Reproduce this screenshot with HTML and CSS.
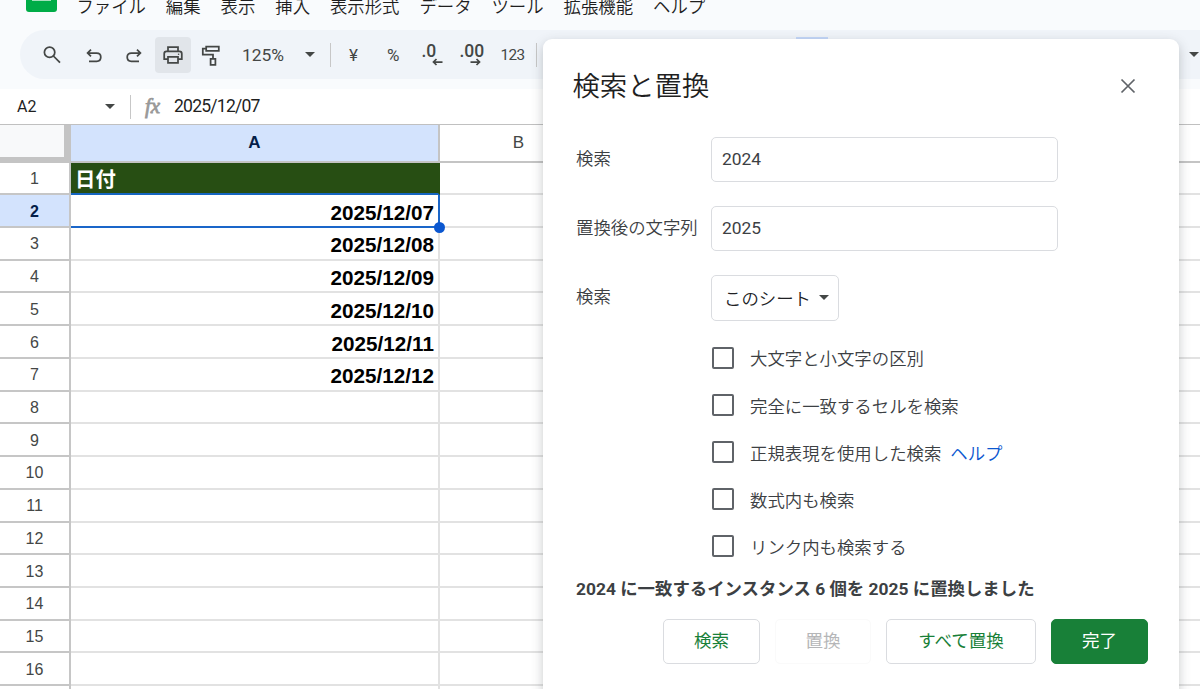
FILE: index.html
```html
<!DOCTYPE html>
<html lang="ja">
<head>
<meta charset="UTF-8" />
<title>スプレッドシート</title>
<link rel="stylesheet" href="styles.css">
</head>
<body>

<div class="menubar">
  <div class="logo"></div>
  <nav class="menus">
    <span>ファイル</span>
    <span>編集</span>
    <span>表示</span>
    <span>挿入</span>
    <span>表示形式</span>
    <span>データ</span>
    <span>ツール</span>
    <span>拡張機能</span>
    <span>ヘルプ</span>
  </nav>
</div>

<div class="toolbar-wrap">
  <div class="toolbar">
    <div class="tool search">
      <svg width="22" height="22" viewBox="0 0 22 22"><circle cx="8.6" cy="8.2" r="5.2"/><path d="M12.4 12l6.6 6.6"/></svg>
    </div>
    <div class="tool undo">
      <svg width="22" height="22" viewBox="0 0 22 22"><path d="M8 5.6L4.6 9 8 12.4M4.8 9h8.8c2.6 0 4.2 1.6 4.2 4s-1.6 4.3-4.2 4.3H6"/></svg>
    </div>
    <div class="tool redo">
      <svg width="22" height="22" viewBox="0 0 22 22"><path d="M15 5.6L18.4 9 15 12.4M18.2 9H9.4c-2.6 0-4.2 1.6-4.2 4s1.6 4.3 4.2 4.3H17"/></svg>
    </div>
    <div class="tool print active">
      <svg width="22" height="22" viewBox="0 0 22 22"><path d="M6 7.4V3.1h10v4.3M5.4 15.2H2.2V9.8c0-1.4.8-2.4 2.2-2.4h13.2c1.4 0 2.2 1 2.2 2.4v5.4h-3.2M6 12.8h10v6H6z"/><circle class="dot" cx="16.6" cy="10.2" r=".8"/></svg>
    </div>
    <div class="tool paint">
      <svg width="22" height="24" viewBox="0 0 22 24"><path d="M6.2 3.5h12.6v4.4H6.2zM6.2 5.6H2.8v6h10.2v4.2M10.6 15.8h4.8v6h-4.8z"/></svg>
    </div>
    <div class="zoom">125%</div>
    <div class="caret"></div>
    <div class="divider"></div>
    <div class="label yen">¥</div>
    <div class="label percent">%</div>
    <div class="decimal less">.0
      <svg width="11" height="8" viewBox="0 0 11 8"><path d="M10.5 4H1.5M4.5 1L1.5 4l3 3"/></svg>
    </div>
    <div class="decimal more">.00
      <svg width="11" height="8" viewBox="0 0 11 8"><path d="M.5 4h9M6.5 1l3 3-3 3"/></svg>
    </div>
    <div class="label number">123</div>
    <div class="divider last"></div>
    <div class="selected-tool"></div>
    <div class="caret end"></div>
  </div>
</div>

<div class="formula-bar">
  <div class="name-box">A2</div>
  <div class="caret"></div>
  <div class="divider"></div>
  <div class="fx">fx</div>
  <div class="formula">2025/12/07</div>
</div>

<div class="sheet">
  <div class="row head">
    <div class="corner"></div>
    <div class="col-a selected">A</div>
    <div class="col-b">B</div>
    <div class="rest"></div>
  </div>
  <div class="row"><div class="num">1</div><div class="col-a title">日付</div><div class="rest"></div></div>
  <div class="row"><div class="num selected">2</div><div class="col-a cursor">2025/12/07<i class="handle"></i></div><div class="rest"></div></div>
  <div class="row"><div class="num">3</div><div class="col-a">2025/12/08</div><div class="rest"></div></div>
  <div class="row"><div class="num">4</div><div class="col-a">2025/12/09</div><div class="rest"></div></div>
  <div class="row"><div class="num">5</div><div class="col-a">2025/12/10</div><div class="rest"></div></div>
  <div class="row"><div class="num">6</div><div class="col-a">2025/12/11</div><div class="rest"></div></div>
  <div class="row"><div class="num">7</div><div class="col-a">2025/12/12</div><div class="rest"></div></div>
  <div class="row"><div class="num">8</div><div class="col-a"></div><div class="rest"></div></div>
  <div class="row"><div class="num">9</div><div class="col-a"></div><div class="rest"></div></div>
  <div class="row"><div class="num">10</div><div class="col-a"></div><div class="rest"></div></div>
  <div class="row"><div class="num">11</div><div class="col-a"></div><div class="rest"></div></div>
  <div class="row"><div class="num">12</div><div class="col-a"></div><div class="rest"></div></div>
  <div class="row"><div class="num">13</div><div class="col-a"></div><div class="rest"></div></div>
  <div class="row"><div class="num">14</div><div class="col-a"></div><div class="rest"></div></div>
  <div class="row"><div class="num">15</div><div class="col-a"></div><div class="rest"></div></div>
  <div class="row"><div class="num">16</div><div class="col-a"></div><div class="rest"></div></div>
  <div class="row"><div class="num"></div><div class="col-a"></div><div class="rest"></div></div>
</div>

<!-- Find and replace -->
<div class="dialog">
  <div class="dialog-head">
    <h2>検索と置換</h2>
    <svg class="close" width="16" height="16" viewBox="0 0 16 16"><path d="M1.5 1.5l13 13M14.5 1.5l-13 13"/></svg>
  </div>

  <div class="field">
    <label>検索</label>
    <div class="input">2024</div>
  </div>
  <div class="field">
    <label>置換後の文字列</label>
    <div class="input">2025</div>
  </div>
  <div class="field">
    <label>検索</label>
    <div class="select">このシート<span class="caret"></span></div>
  </div>

  <div class="options">
    <div class="option"><span class="box"></span>大文字と小文字の区別</div>
    <div class="option"><span class="box"></span>完全に一致するセルを検索</div>
    <div class="option"><span class="box"></span>正規表現を使用した検索<a class="help">ヘルプ</a></div>
    <div class="option"><span class="box"></span>数式内も検索</div>
    <div class="option"><span class="box"></span>リンク内も検索する</div>
  </div>

  <p class="message">2024 に一致するインスタンス 6 個を 2025 に置換しました</p>

  <div class="buttons">
    <div class="button find">検索</div>
    <div class="button disabled">置換</div>
    <div class="button all">すべて置換</div>
    <div class="button done">完了</div>
  </div>
</div>

</body>
</html>
```
FILE: styles.css
```css
* {
  box-sizing: border-box;
}
body {
  margin: 0;
  height: 689px;
  position: relative;
  overflow: hidden;
  background: #fff;
  color: #1f1f1f;
  font-family: Roboto, "Noto Sans CJK JP", sans-serif;
  font-size: 17.4px;
}
svg {
  display: block;
  fill: none;
  stroke: #444746;
  stroke-width: 1.75;
}
.caret {
  width: 0;
  height: 0;
  flex: none;
  border: 5px solid transparent;
  border-top-color: #444746;
  border-bottom: 0;
}
.divider {
  width: 1px;
  height: 24px;
  flex: none;
  background: #c7c7c7;
}

/* menu bar */
.menubar {
  display: flex;
  height: 30px;
  padding-left: 26px;
  background: #f9fbfd;
}
.logo {
  width: 31px;
  height: 12px;
  padding: 0 6px;
  background: #00ac47;
  border-radius: 0 0 3px 3px;
}
.logo::before {
  content: "";
  display: block;
  height: 1px;
  background: #a5e0bc;
}
.menus {
  display: flex;
  gap: 19.9px;
  margin-left: 19.4px;
  height: 15px;
  line-height: 15px;
  font-weight: 350;
  white-space: nowrap;
}

/* toolbar */
.toolbar-wrap {
  height: 59px;
  padding-left: 20px;
  background: #f9fbfd;
}
.toolbar {
  display: flex;
  align-items: center;
  height: 49px;
  background: #f0f4f9;
  border-radius: 25px 0 0 25px;
  color: #444746;
}
.tool {
  display: flex;
  justify-content: center;
  align-items: center;
  width: 36px;
  height: 36px;
  border-radius: 4px;
}
.search {
  margin-left: 14px;
}
.undo {
  margin-left: 6px;
}
.redo {
  margin-left: 3px;
}
.print {
  margin-left: 4px;
}
.active {
  background: #e1e5ea;
}
.paint {
  margin-left: 2px;
}
.dot {
  fill: #444746;
  stroke: none;
}
.zoom {
  width: 63px;
  margin-left: 13px;
  padding-top: 1px;
  font-size: 17.4px;
}
.toolbar .divider {
  margin-left: 15px;
}
.label {
  font-size: 17px;
}
.yen {
  margin-left: 18px;
}
.percent {
  margin-left: 29px;
}
.decimal {
  position: relative;
  width: 22px;
  height: 29px;
  line-height: 23px;
  font-size: 17.5px;
  font-weight: 500;
}
.less {
  margin-left: 22px;
}
.more {
  margin-left: 16px;
}
.decimal svg {
  position: absolute;
  left: 11px;
  bottom: 3px;
}
.number {
  width: 28px;
  margin-left: 19px;
  font-size: 15.3px;
  letter-spacing: -.5px;
}
.toolbar .last {
  margin-left: 8px;
}
.selected-tool {
  width: 32px;
  height: 36px;
  margin-left: 259px;
  background: #c4d7f8;
}
.end {
  margin-left: 361px;
}

/* formula bar */
.formula-bar {
  display: flex;
  align-items: center;
  height: 36px;
  padding-left: 17px;
  border-bottom: 1px solid #c0c0c0;
}
.name-box {
  width: 88px;
  font-size: 16px;
}
.formula-bar .divider {
  margin-left: 15px;
}
.fx {
  width: 29px;
  margin-left: 14px;
  color: #999;
  font: italic 21px "Liberation Serif", serif;
  -webkit-text-stroke: .8px #999;
}
.formula {
  font-size: 17.6px;
  letter-spacing: -.8px;
  padding-bottom: 1px;
}

/* sheet grid */
.sheet {
  font-family: "Liberation Sans", "Noto Sans CJK JP", sans-serif;
}
.row {
  display: flex;
  height: 32.72px;
}
.row > div {
  height: 100%;
  border-bottom: 2px solid #e2e2e2;
}
.row .num {
  display: flex;
  justify-content: center;
  align-items: center;
  width: 71px;
  padding-top: 2px;
  border-right: 2px solid #c6c6c6;
  border-bottom-color: #c6c6c6;
  color: #444746;
  font-size: 16px;
}
.row .num.selected {
  background: #d3e3fd;
  color: #041e49;
  font-weight: bold;
}
.row .col-a {
  position: relative;
  display: flex;
  justify-content: flex-end;
  align-items: center;
  width: 369px;
  padding: 4px 4px 0 4px;
  border-right: 2px solid #e2e2e2;
  color: #000;
  font-size: 20.7px;
  font-weight: bold;
}
.rest {
  flex: 1;
}
.row .title {
  justify-content: flex-start;
  padding-top: 1px;
  background: #274e13;
  border-color: #274e13;
  border-bottom-color: #1565c0;
  color: #fff;
  font-size: 20.4px;
}
.row .cursor {
  border-color: #1a66c9;
}
.handle {
  position: absolute;
  right: -7px;
  bottom: -7px;
  width: 11px;
  height: 11px;
  border-radius: 50%;
  background: #0b57d0;
  z-index: 1;
}
.row.head {
  height: 37.6px;
}
.row.head > div {
  border-bottom-color: #c4c4c4;
}
.head .corner {
  width: 71px;
  background: #f8f9fa;
  border-right: 7px solid #c4c4c4;
  border-bottom-width: 6px;
}
.row.head .col-a {
  justify-content: center;
  padding: 0;
  border-right-color: #c4c4c4;
  background: #d3e3fd;
  color: #041e49;
  font-size: 17px;
}
.col-b {
  display: flex;
  justify-content: center;
  align-items: center;
  width: 157px;
  color: #444746;
  font-size: 17px;
}

/* dialog */
.dialog {
  position: absolute;
  left: 543px;
  top: 39px;
  width: 636px;
  height: 680px;
  padding: 0 31px 0 33px;
  background: #fff;
  border-radius: 9px;
  box-shadow: 0 4px 12px rgba(60, 64, 67, .28);
  color: #3c4043;
  font-weight: 350;
}
.dialog-head {
  display: flex;
  justify-content: space-between;
  align-items: center;
  height: 98px;
  margin: 0 12px 0 -3.6px;
}
h2 {
  margin: 0 0 8px;
  color: #1f1f1f;
  font-size: 27.4px;
  font-weight: 350;
}
.close {
  margin-bottom: 5px;
  stroke: #5f6368;
}
.field {
  display: flex;
  align-items: center;
  height: 45px;
  margin-bottom: 24px;
}
.field label {
  width: 135px;
  padding-bottom: 4px;
}
.input {
  width: 347px;
  height: 45px;
  padding-left: 10px;
  border: 1px solid #dadce0;
  border-radius: 5px;
  font-size: 17.4px;
  font-weight: 400;
  line-height: 43px;
}
.select {
  display: flex;
  align-items: center;
  justify-content: space-between;
  width: 128px;
  height: 46px;
  padding: 0 9px 1px 12px;
  border: 1px solid #dadce0;
  border-radius: 5px;
  color: #202124;
}
.options {
  margin-top: -9.6px;
  padding-left: 136px;
}
.option {
  display: flex;
  align-items: center;
  height: 47.1px;
}
.options .box {
  width: 22px;
  height: 22px;
  margin-right: 16px;
  border: 2px solid #5f6368;
  border-radius: 2px;
}
.help {
  margin-left: 9px;
  color: #0b57d0;
}
.message {
  margin: 6px 0 17px;
  height: 26px;
  line-height: 26px;
  font-size: 17.4px;
  font-weight: 700;
  white-space: nowrap;
}
.buttons {
  display: flex;
  justify-content: flex-end;
  gap: 15px;
}
.button {
  width: 97px;
  height: 45px;
  border: 1px solid #dadce0;
  border-radius: 5px;
  color: #188038;
  font-size: 17.5px;
  font-weight: 400;
  line-height: 43px;
  text-align: center;
}
.disabled {
  width: 96px;
  border-color: #fafafa;
  color: #b5b6b8;
}
.all {
  width: 150px;
}
.done {
  background: #188038;
  border-color: #188038;
  color: #fff;
}
```
